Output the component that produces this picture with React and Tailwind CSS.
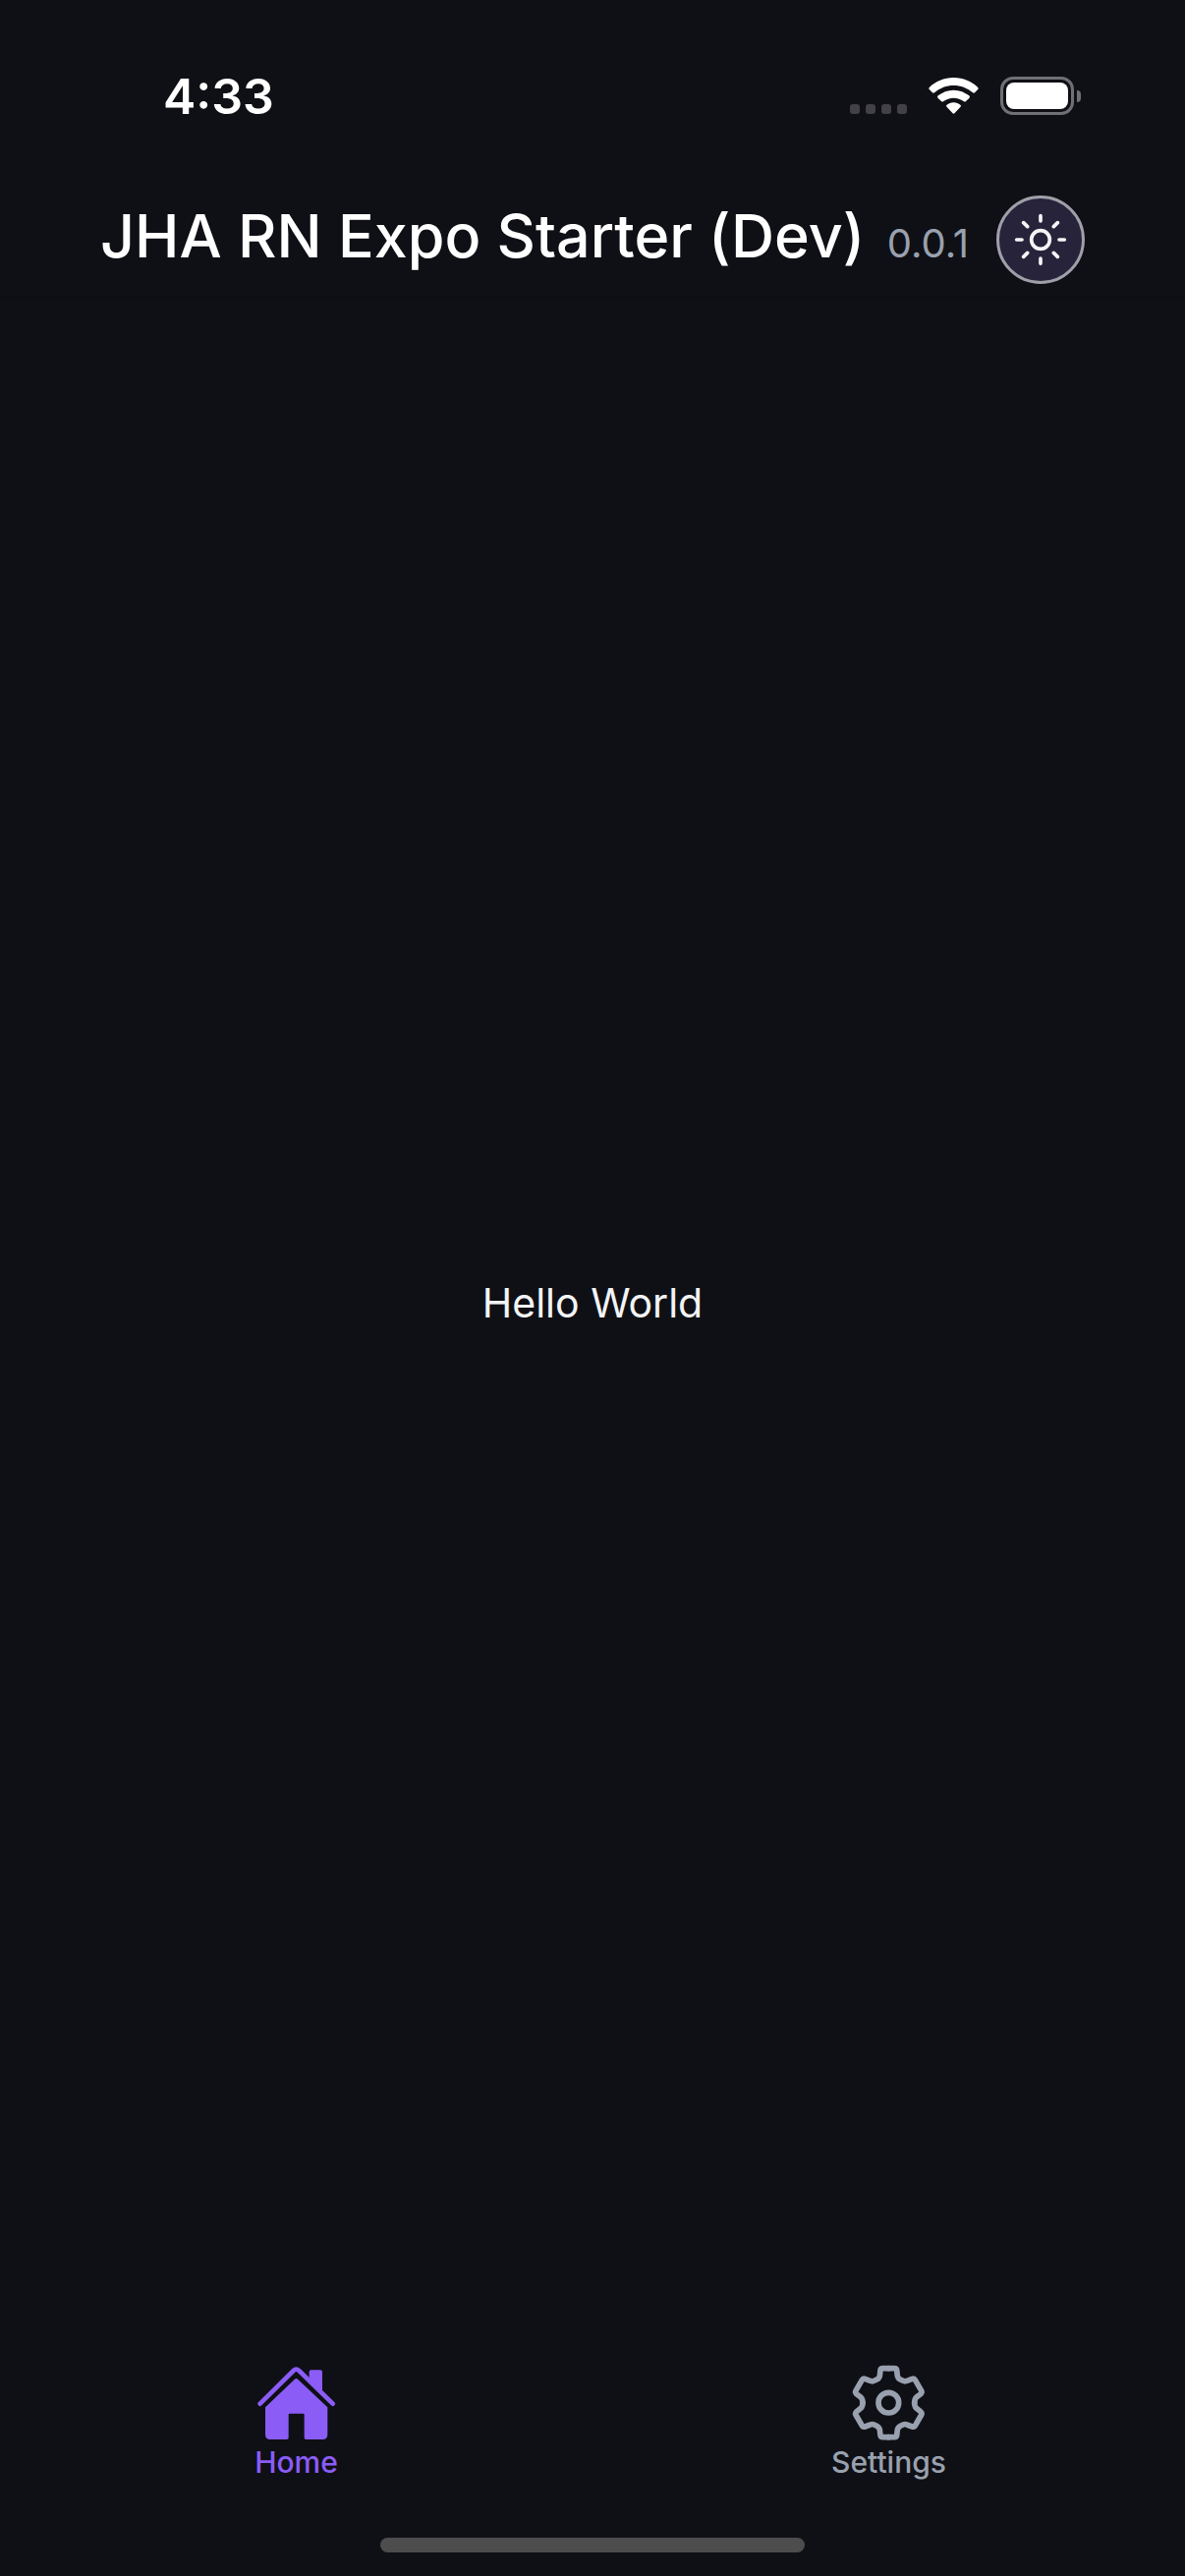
import { useState } from "react";

function StatusBar() {
  return (
    <div className="flex items-start justify-between pt-[78px] pl-[166px] pr-[106px]">
      <time className="text-[50px] leading-10 font-semibold text-white">4:33</time>
      <div className="flex items-center">
        <div className="mr-[22px] flex gap-[6px] self-end pb-px" aria-hidden="true">
          <span className="size-[10px] rounded-[3px] bg-[#414146]" />
          <span className="size-[10px] rounded-[3px] bg-[#414146]" />
          <span className="size-[10px] rounded-[3px] bg-[#414146]" />
          <span className="size-[10px] rounded-[3px] bg-[#414146]" />
        </div>
        <svg className="mr-[22px] h-[37px] w-[51px]" viewBox="0 0 153 111" fill="#fff" aria-label="Wi-Fi">
          <path d="M76.500 0C106 0 131 12 150 29Q154 33 150 37L141 46Q138 49 134 45C118 32 98 24 76.500 24S35 32 19 45Q15 49 12 46L3 37Q-1 33 3 29C22 12 47 0 76.500 0Z" />
          <path d="M76.500 38C95 38 111 45 124 55Q128 59 124 63L114 72Q111 75 107 72C98 66 88 62 76.500 62S55 66 46 72Q42 75 39 72L29 63Q25 59 29 55C42 45 58 38 76.500 38Z" />
          <path d="M76.500 76C85 76 91 79 97 83Q101 86 97 90L80 108Q76.500 112 73 108L56 90Q52 86 56 83C62 79 68 76 76.500 76Z" />
        </svg>
        <div className="flex items-center gap-[3px]" role="img" aria-label="Battery full">
          <div className="h-[39px] w-[75px] rounded-[13px] border-[3px] border-[#707074] p-[3px]">
            <div className="h-full rounded-[8px] bg-white" />
          </div>
          <div className="h-3 w-1 rounded-r-full bg-[#707074]" />
        </div>
      </div>
    </div>
  );
}

function SunIcon() {
  return (
    <svg className="size-[54px]" viewBox="-81 -81 162 162" fill="none" stroke="#f5f5f7" strokeWidth="11" strokeLinecap="round" aria-hidden="true">
      <circle r="28" />
      <path d="M0-73V-57M0 57V73M-73 0H-57M57 0H73M-52-52L-40-40M40 40L52 52M52-52L40-40M-40 40L-52 52" />
    </svg>
  );
}

function HomeIcon() {
  return (
    <svg className="size-20" viewBox="94 77 240 240" fill="currentColor" aria-hidden="true">
      <path d="M102 199L204 98Q212 90 221 98L324 199" fill="none" stroke="currentColor" strokeWidth="14" strokeLinecap="round" strokeLinejoin="round" />
      <path d="M252 124V102Q252 96 258 96H286Q292 96 292 102V164Z" />
      <path d="M207 125Q212 119 218 125L308 210V293Q308 308 293 308H242Q237 308 237 303V232Q237 229 234 229H192Q189 229 189 232V303Q189 308 184 308H133Q118 308 118 293V210Z" />
    </svg>
  );
}

const GEAR_QUARTER =
  "M0-105H18Q24-105 25-100L27-82Q29-74 36-71L44-67Q50-64 56-67L72-73Q78-75 81-70L100-37Q103-32 98-27L85-17Q79-11 79 0";

function SettingsIcon() {
  return (
    <svg className="size-20" viewBox="-118 -119 240 240" fill="none" stroke="currentColor" strokeWidth="17" strokeLinecap="round" strokeLinejoin="round" aria-hidden="true">
      <circle r="31" />
      <path d={GEAR_QUARTER} />
      <path d={GEAR_QUARTER} transform="scale(-1 1)" />
      <path d={GEAR_QUARTER} transform="scale(1 -1)" />
      <path d={GEAR_QUARTER} transform="scale(-1 -1)" />
    </svg>
  );
}

const TABS = [
  { label: "Home", Icon: HomeIcon },
  { label: "Settings", Icon: SettingsIcon },
];

export default function App() {
  const [active, setActive] = useState("Home");
  return (
    <div className="flex min-h-screen flex-col bg-[#0f1015] font-['Inter','Liberation_Sans',sans-serif]">
      <StatusBar />
      <header className="mt-20 flex items-center justify-between border-b-2 border-[#0d0e12] px-[102px] pb-3">
        <h1 className="flex flex-1 items-baseline justify-between pr-7 text-[61px] leading-[84px] font-medium whitespace-nowrap text-white">
          JHA RN Expo Starter (Dev)
          <small className="text-[40px] font-normal text-gray-400">0.0.1</small>
        </h1>
        <button type="button" aria-label="Toggle theme" className="flex size-[90px] shrink-0 items-center justify-center rounded-full border-[3px] border-[#a09fa9] bg-[#27233a]">
          <SunIcon />
        </button>
      </header>
      <main className="flex flex-1 items-center justify-center">
        <p className="text-[41px] leading-[60px] text-gray-100">Hello World</p>
      </main>
      <nav className="flex pt-[58px] pb-[57px]">
        {TABS.map(({ label, Icon }) => (
          <button
            key={label}
            type="button"
            onClick={() => setActive(label)}
            className={`flex flex-1 flex-col items-center ${active === label ? "text-[#8b5cf6]" : "text-gray-400"}`}
          >
            <Icon />
            <span className="text-[30px] leading-10 font-medium">{label}</span>
          </button>
        ))}
      </nav>
      <div className="mx-auto mb-6 h-[15px] w-[432px] rounded-full bg-[#4d4d4d]" />
    </div>
  );
}
